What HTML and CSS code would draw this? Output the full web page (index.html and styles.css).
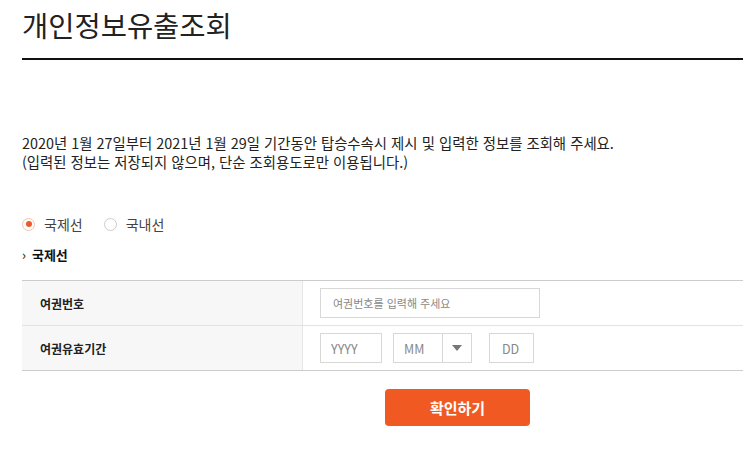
FILE: index.html
```html
<!DOCTYPE html>
<html lang="ko">
<head>
    <meta charset="UTF-8">
    <meta name="viewport" content="width=device-width, initial-scale=1.0">
    <title>개인정보유출조회</title>
    <link rel="stylesheet" href="styles.css">
</head>
<body>
    <div class="page">
        <h1 class="title">개인정보유출조회</h1>

        <p class="notice">
            2020년 1월 27일부터 2021년 1월 29일 기간동안 탑승수속시 제시 및 입력한 정보를 조회해 주세요.<br>
            (입력된 정보는 저장되지 않으며, 단순 조회용도로만 이용됩니다.)
        </p>

        <div class="radios">
            <label class="radio"><span class="dot on"></span>국제선</label>
            <label class="radio"><span class="dot"></span>국내선</label>
        </div>

        <h2 class="sub"><span class="arrow">›</span>국제선</h2>

        <div class="form">
            <div class="row">
                <div class="label">여권번호</div>
                <div class="field">
                    <input type="text" class="box passport" placeholder="여권번호를 입력해 주세요">
                </div>
            </div>
            <div class="row">
                <div class="label">여권유효기간</div>
                <div class="field">
                    <input type="text" class="box year" placeholder="YYYY">
                    <div class="box month">
                        <span class="mm">MM</span>
                        <span class="caret"></span>
                    </div>
                    <input type="text" class="box day" placeholder="DD">
                </div>
            </div>
        </div>

        <div class="actions">
            <button class="btn">확인하기</button>
        </div>
    </div>
</body>
</html>
```

FILE: styles.css
```css
body{
    margin: 0;
    font-family: "Noto Sans CJK KR", "Noto Sans", sans-serif;
    color: #222;
    background: #fff;
}
.page{
    padding: 0 0 0 22px;
}
.title{
    margin: 0;
    padding: 6px 0 14px;
    font-size: 28.5px;
    font-weight: 400;
    line-height: 38px;
    border-bottom: 2px solid #111;
}
.notice{
    margin: 73px 0 0;
    font-size: 14.4px;
    line-height: 19px;
    color: #222;
}
.radios{
    display: flex;
    gap: 21px;
    margin-top: 43px;
    font-size: 14px;
    color: #444;
}
.radio{
    display: flex;
    align-items: center;
    gap: 9px;
}
.dot{
    width: 13px;
    height: 13px;
    border: 1px solid #ccc;
    border-radius: 50%;
    box-sizing: border-box;
    position: relative;
}
.dot.on{
    border-color: #f3c4b0;
}
.dot.on::after{
    content: "";
    position: absolute;
    left: 2.5px;
    top: 2.5px;
    width: 6px;
    height: 6px;
    border-radius: 50%;
    background: #ea5a2e;
}
.sub{
    margin: 11px 0 0;
    font-size: 13px;
    font-weight: 700;
    color: #111;
    display: flex;
    align-items: center;
    gap: 6px;
}
.arrow{
    font-weight: 400;
    font-size: 13px;
}
.form{
    margin-top: 16px;
    border-top: 1px solid #ccc;
    border-bottom: 1px solid #ccc;
}
.row{
    display: flex;
    height: 44px;
}
.row + .row{
    border-top: 1px solid #e3e3e3;
}
.label{
    width: 281px;
    background: #f7f7f7;
    border-right: 1px solid #e6e6e6;
    padding-left: 18px;
    box-sizing: border-box;
    display: flex;
    align-items: center;
    font-size: 12px;
    font-weight: 700;
    color: #222;
}
.field{
    display: flex;
    align-items: center;
    padding-left: 17px;
    gap: 11px;
}
.box{
    height: 30px;
    box-sizing: border-box;
    border: 1px solid #d8d8d8;
    font-family: inherit;
    font-size: 11px;
    padding: 0 12px;
    color: #555;
    outline: none;
}
.box::placeholder{
    color: #888;
}
.passport{
    width: 220px;
}
.year, .day, .mm{
    font-size: 12.5px;
}
.year{
    width: 62px;
    padding-left: 10px;
}
.day{
    width: 45px;
    margin-left: 6px;
}
.month{
    width: 79px;
    display: flex;
    align-items: center;
    padding: 0;
}
.mm{
    flex: 1;
    padding-left: 10px;
    color: #888;
}
.caret{
    width: 28px;
    height: 100%;
    border-left: 1px solid #d8d8d8;
    display: flex;
    align-items: center;
    justify-content: center;
}
.caret::after{
    content: "";
    border-left: 5px solid transparent;
    border-right: 5px solid transparent;
    border-top: 6px solid #777;
}
.actions{
    display: flex;
    padding-left: 363px;
    margin-top: 18px;
}
.btn{
    width: 145px;
    height: 37px;
    border: none;
    border-radius: 4px;
    background: #f05a22;
    color: #fff;
    font-family: inherit;
    font-size: 15px;
    font-weight: 700;
    cursor: pointer;
}
```
